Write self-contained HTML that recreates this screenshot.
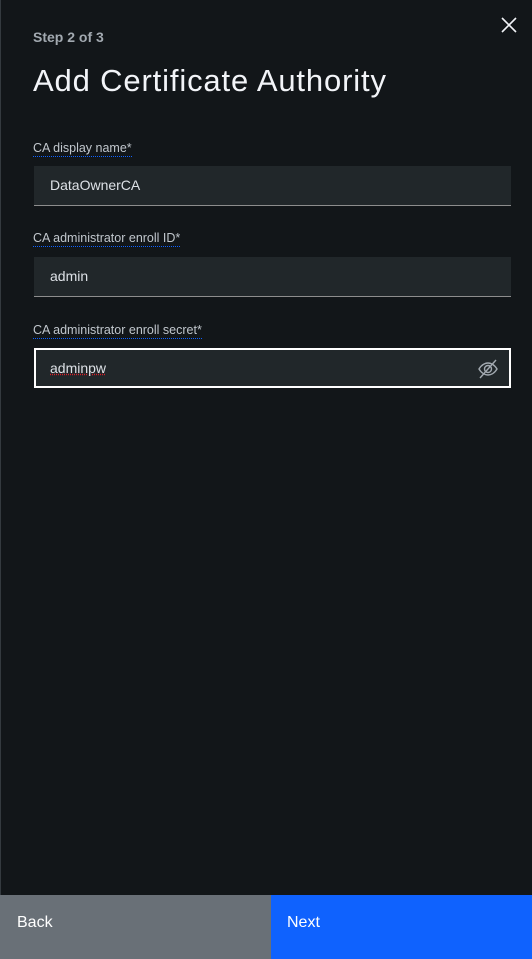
<!DOCTYPE html>
<html><head><style>
*{margin:0;padding:0;box-sizing:border-box}
body{width:532px;height:959px;background:#121619;font-family:"Liberation Sans",sans-serif;position:relative;overflow:hidden;border-left:1px solid #343a3f}
.step{position:absolute;left:32px;top:29px;font-size:14px;font-weight:bold;color:#a2a9b0}
h1{position:absolute;left:32px;top:63px;font-size:31px;font-weight:normal;color:#f2f4f8;letter-spacing:0.85px}
.lbl{position:absolute;left:32px;font-size:12.5px;color:#c1c7cd;padding-bottom:2px;line-height:14px;background:repeating-linear-gradient(90deg,#0f62fe 0 1px,transparent 1px 2px) left bottom/100% 1px no-repeat}
.f{position:absolute;left:33px;width:477px;height:40px;background:#21272a;border-bottom:1px solid #8d8d8d;color:#dde1e6;font-size:14px;padding-left:16px;line-height:39px}
.x{position:absolute;right:14px;top:16px}
.btn{position:absolute;top:895px;height:64px;font-size:16px;color:#fff;padding:19px 0 0 16px}
</style></head><body>
<svg class="x" width="18" height="18" viewBox="0 0 18 18"><path d="M2 2L16 16M16 2L2 16" stroke="#f2f4f8" stroke-width="1.6"/></svg>
<div class="step">Step 2 of 3</div>
<h1>Add Certificate Authority</h1>
<div class="lbl" style="top:141px">CA display name*</div>
<div class="f" style="top:166px">DataOwnerCA</div>
<div class="lbl" style="top:231px">CA administrator enroll ID*</div>
<div class="f" style="top:257px">admin</div>
<div class="lbl" style="top:323px">CA administrator enroll secret*</div>
<div class="f" style="top:348px;border:2px solid #fff;padding-left:14px;line-height:36px"><span style="text-decoration:underline dotted #da1e28">adminpw</span>
<svg style="position:absolute;right:10px;top:8px" width="22" height="22" viewBox="0 0 22 22"><path d="M2 11C5 6 9 5 11 5S17 6 20 11C17 16 13 17 11 17S5 16 2 11Z" fill="none" stroke="#a2a9b0" stroke-width="1.4"/><circle cx="11" cy="11" r="3.5" fill="none" stroke="#a2a9b0" stroke-width="1.4"/><path d="M3 20L19 2" stroke="#a2a9b0" stroke-width="1.4"/></svg></div>
<div class="btn" style="left:-1px;width:272px;background:#697077;padding-left:17px">Back</div>
<div class="btn" style="left:270px;width:262px;background:#0f62fe">Next</div>
</body></html>
